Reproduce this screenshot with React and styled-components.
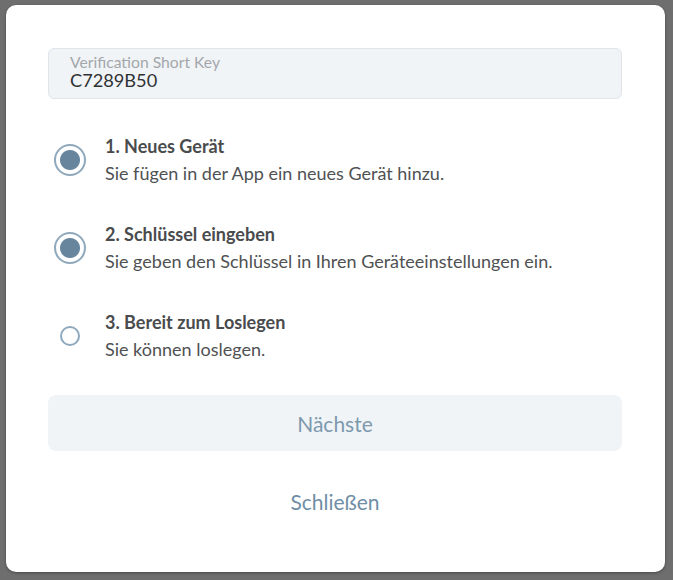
import styled, { createGlobalStyle } from "styled-components";

const GlobalStyle = createGlobalStyle`
  html, body {
    margin: 0;
    padding: 0;
    background: #6e6e6e;
  }
  body {
    font-family: Lato, "Open Sans", sans-serif;
    height: 580px;
    overflow: hidden;
  }
`;

const Backdrop = styled.div`
  padding: 5px 8px 8px 6px;
`;

const Dialog = styled.div`
  width: 659px;
  height: 567px;
  box-sizing: border-box;
  background: #fff;
  border-radius: 10px;
  box-shadow: 0 1px 3px rgba(0, 0, 0, 0.35);
  padding: 43px 43px 0 42px;
  display: flex;
  flex-direction: column;
`;

const KeyField = styled.div`
  height: 51px;
  box-sizing: border-box;
  background: #f1f4f7;
  border: 1px solid #dfe5ea;
  border-radius: 6px;
  padding: 5px 21px 0;
`;

const KeyLabel = styled.div`
  font-size: 15.7px;
  line-height: 16px;
  color: #a3a7ab;
`;

const KeyValue = styled.div`
  font-size: 18.2px;
  line-height: 20px;
  color: #2f3235;
`;

const Steps = styled.div`
  display: flex;
  flex-direction: column;
  gap: 34px;
  margin-top: 34px;
`;

const Step = styled.div`
  display: flex;
  align-items: center;
  gap: 19px;
  padding-left: 6px;
`;

const Radio = styled.span`
  width: 32px;
  height: 32px;
  flex: none;
  display: flex;
  align-items: center;
  justify-content: center;

  &::before {
    content: "";
    box-sizing: border-box;
    width: ${(p) => (p.$checked ? "32px" : "20px")};
    height: ${(p) => (p.$checked ? "32px" : "20px")};
    border-radius: 50%;
    border: 2px solid #8ea9bd;
    background: ${(p) =>
      p.$checked
        ? "radial-gradient(circle, #67869e 0 9.5px, #fff 10.5px)"
        : "#fff"};
  }
`;

const StepText = styled.div`
  display: flex;
  flex-direction: column;
  font-size: 18px;
  line-height: 27px;
`;

const StepTitle = styled.div`
  font-weight: 700;
  color: #494b4d;
`;

const StepHint = styled.div`
  color: #4f5153;
`;

const NextButton = styled.button`
  margin-top: 32px;
  height: 56px;
  border: none;
  border-radius: 8px;
  background: #f0f4f7;
  color: #7d99ae;
  font-family: Lato, sans-serif;
  font-size: 21px;
  cursor: pointer;
`;

const CloseButton = styled.button`
  margin-top: 34px;
  align-self: center;
  border: none;
  background: none;
  color: #6f8ea6;
  font-family: Lato, sans-serif;
  font-size: 21px;
  line-height: 25px;
  padding: 4px 8px;
  cursor: pointer;
`;

const steps = [
  { title: "1. Neues Gerät", hint: "Sie fügen in der App ein neues Gerät hinzu.", done: true },
  { title: "2. Schlüssel eingeben", hint: "Sie geben den Schlüssel in Ihren Geräteeinstellungen ein.", done: true },
  { title: "3. Bereit zum Loslegen", hint: "Sie können loslegen.", done: false },
];

export default function App() {
  return (
    <>
      <GlobalStyle />
      <Backdrop>
        <Dialog>
          <KeyField>
            <KeyLabel>Verification Short Key</KeyLabel>
            <KeyValue>C7289B50</KeyValue>
          </KeyField>
          <Steps>
            {steps.map((s) => (
              <Step key={s.title}>
                <Radio $checked={s.done} />
                <StepText>
                  <StepTitle>{s.title}</StepTitle>
                  <StepHint>{s.hint}</StepHint>
                </StepText>
              </Step>
            ))}
          </Steps>
          <NextButton>Nächste</NextButton>
          <CloseButton>Schließen</CloseButton>
        </Dialog>
      </Backdrop>
    </>
  );
}
